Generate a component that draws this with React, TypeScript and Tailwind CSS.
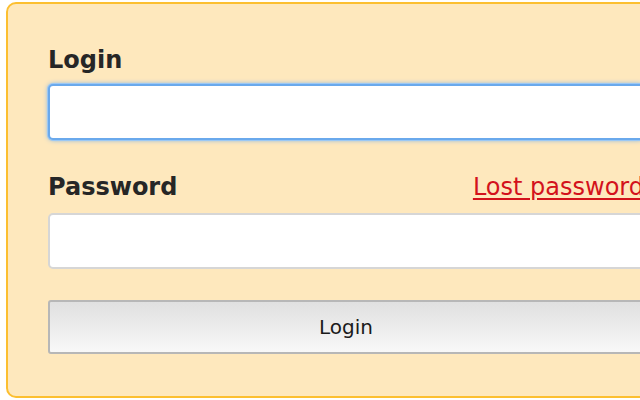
import React, { useState } from "react";

const App: React.FC = () => {
  const [login, setLogin] = useState("");
  const [password, setPassword] = useState("");

  return (
    <div className="w-[640px] h-[400px] overflow-hidden bg-white font-['DejaVu_Sans',sans-serif]">
      <form
        className="ml-[6px] mt-[2px] w-[680px] h-[396px] rounded-[10px] border-2 border-[#fcbf30] bg-[#fee8bd] pl-[40px] pr-[40px] pt-[42px]"
        onSubmit={(e) => e.preventDefault()}
      >
        <label className="block text-[24px] leading-[28px] font-bold text-[#262626]">Login</label>
        <input
          className="mt-[10px] block w-full h-[56px] rounded-[5px] border-2 border-[#6aa9ec] bg-white px-3 text-[20px] outline-none shadow-[0_0_0_1px_#9cc8f4,0_0_5px_#6aa9ec]"
          value={login}
          onChange={(e) => setLogin(e.target.value)}
        />

        <div className="mt-[33px] flex items-baseline justify-between">
          <label className="text-[24px] leading-[28px] font-bold text-[#262626]">Password</label>
          <a href="#" className="text-[24px] leading-[28px] text-[#d3121c] underline underline-offset-[3px]">
            Lost password
          </a>
        </div>
        <input
          type="password"
          className="mt-[12px] block w-full h-[56px] rounded-[5px] border-2 border-[#d6d6d6] bg-white px-3 text-[20px] outline-none"
          value={password}
          onChange={(e) => setPassword(e.target.value)}
        />

        <button
          type="submit"
          className="mt-[31px] block w-full h-[54px] rounded-[3px] border-2 border-[#b7b7b7] bg-gradient-to-b from-[#e0e0e0] to-[#f8f8f8] text-[20px] text-[#1a1a1a]"
        >
          Login
        </button>
      </form>
    </div>
  );
};

export default App;
